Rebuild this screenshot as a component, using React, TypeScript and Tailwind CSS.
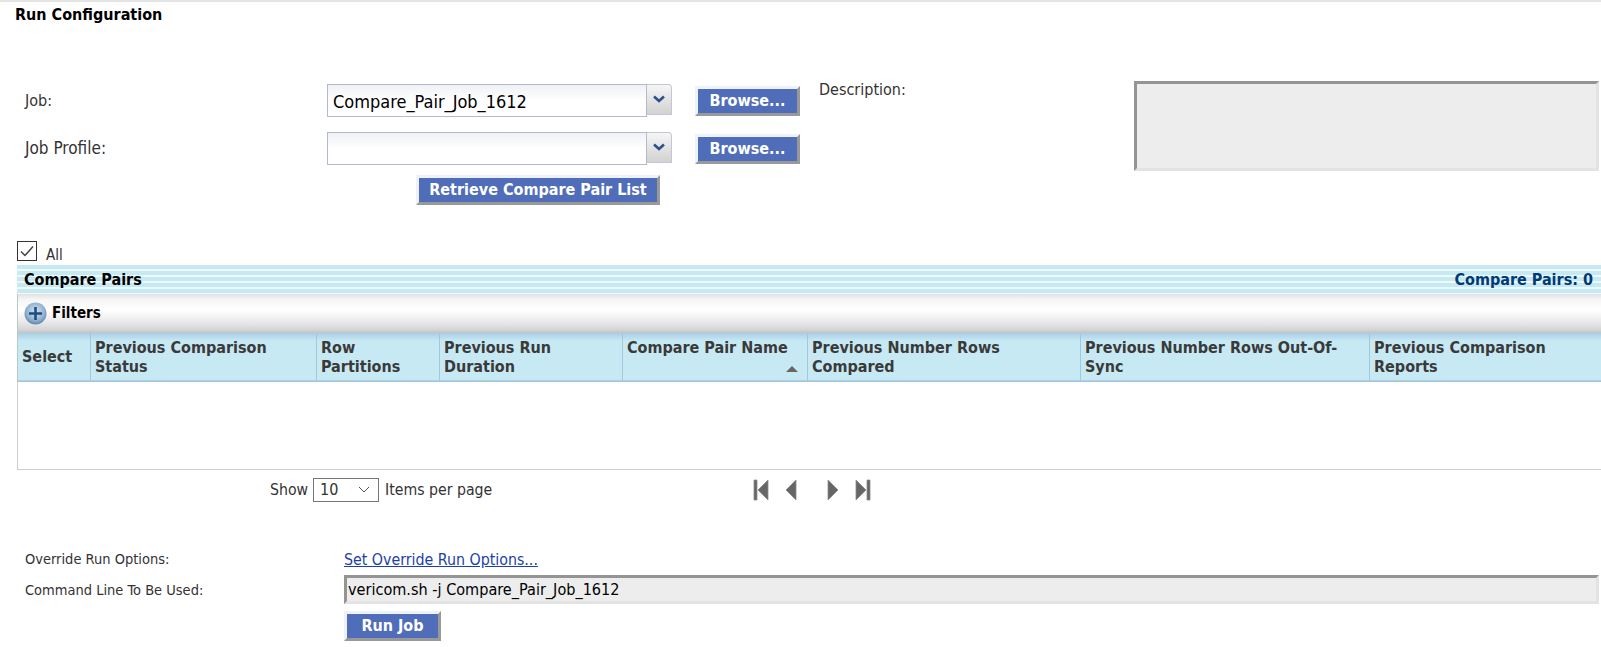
import React from 'react';

const columns = [
  { label: 'Select', width: 'w-[73px]' },
  { label: 'Previous Comparison\nStatus', width: 'w-[226px]' },
  { label: 'Row\nPartitions', width: 'w-[123px]' },
  { label: 'Previous Run\nDuration', width: 'w-[183px]' },
  { label: 'Compare Pair Name', width: 'w-[185px]', sorted: true },
  { label: 'Previous Number Rows\nCompared', width: 'w-[273px]' },
  { label: 'Previous Number Rows Out-Of-\nSync', width: 'w-[289px]' },
  { label: 'Previous Comparison\nReports', width: 'w-[232px]' },
];

const ActionButton = ({ label, className }: { label: string; className: string }) => (
  <button
    className={`flex items-center justify-center border-[3px] border-t-[#eef2fb] border-l-[#eef2fb] border-r-[#999999] border-b-[#999999] bg-[#4f6db8] text-[16px] font-bold text-white ${className}`}>
    {label}
  </button>
);

const Combo = ({ value }: { value?: string }) => (
  <div className="flex h-[33px] w-[345px] items-start">
    <div className="h-[33px] w-[320px] border border-[#b5b8cf] bg-gradient-to-b from-[#eef1f3] via-white to-white pl-[5px] text-[18px] leading-[33px] text-black">
      {value}
    </div>
    <div className="flex h-[31px] w-[25px] items-center justify-center rounded-tr-sm border border-l-0 border-[#c4c6d6] bg-gradient-to-b from-[#f6f6f6] to-[#d2d2d2]">
      <svg width="14" height="9" viewBox="0 0 14 9">
        <path d="M2 1.5 L7 6 L12 1.5" fill="none" stroke="#2f4f8f" strokeWidth="2.6" />
      </svg>
    </div>
  </div>
);

const PagerIcon = ({ d, className }: { d: string; className: string }) => (
  <svg width="16" height="22" viewBox="0 0 16 22" className={className}>
    <path d={d} fill="#666666" stroke="#8a8a8a" strokeWidth="0.8" />
  </svg>
);

export default function App() {
  return (
    <div className="h-[647px] w-full overflow-hidden border-t-2 border-[#e4e4e4] bg-white font-['DejaVu_Sans',sans-serif] text-[#333333] [font-stretch:condensed]">
      <h1 className="h-[26px] pl-[15px] pt-[3px] text-[16px] leading-[20px] font-bold text-black">Run Configuration</h1>

      {/* Job form */}
      <div className="mt-[56px] flex items-start">
        <div className="w-[819px]">
          <div className="flex h-[33px] items-center pl-[25px]">
            <span className="w-[302px] pt-[1px] text-[16px]">Job:</span>
            <Combo value="Compare_Pair_Job_1612" />
            <ActionButton label="Browse..." className="ml-[23px] h-[30px] w-[105px]" />
          </div>
          <div className="mt-[15px] flex h-[33px] items-center pl-[25px]">
            <span className="w-[302px] pt-[1px] text-[17px]">Job Profile:</span>
            <Combo />
            <ActionButton label="Browse..." className="ml-[23px] h-[30px] w-[105px]" />
          </div>
          <ActionButton label="Retrieve Compare Pair List" className="ml-[416px] mt-[10px] h-[30px] w-[244px]" />
        </div>
        <span className="-mt-[6px] w-[315px] text-[16px]">Description:</span>
        <div className="-mt-[3px] h-[90px] w-[465px] border-[3px] border-t-[#949494] border-l-[#949494] border-r-[#e3e3e3] border-b-[#e3e3e3] bg-[#ededed]" />
      </div>

      {/* All checkbox */}
      <div className="mt-[36px] flex h-[24px] items-start pl-[17px]">
        <div className="flex h-[20px] w-[20px] items-center justify-center border border-[#333333] bg-white">
          <svg width="16" height="14" viewBox="0 0 16 14">
            <path d="M2 7.5 L6 11.5 L14 2.5" fill="none" stroke="#444444" strokeWidth="1.5" />
          </svg>
        </div>
        <span className="ml-[9px] mt-[4px] text-[15px] leading-[20px]">All</span>
      </div>

      {/* Compare pairs grid */}
      <div className="ml-[17px]">
        <div className="flex h-[29px] items-center justify-between bg-[repeating-linear-gradient(180deg,#c7e9f4_0px,#c7e9f4_4px,#eef9fc_4px,#eef9fc_6px)] pl-[7px] pr-[8px] text-[16px] font-bold">
          <span className="text-black">Compare Pairs</span>
          <span className="text-[#003a75]">Compare Pairs: 0</span>
        </div>
        <div className="flex h-[39px] items-center gap-[5px] border-l border-[#b9c9c4] bg-[linear-gradient(180deg,#e2e2e2_0%,#f6f6f6_15%,#ffffff_42%,#e6e6e6_75%,#d4d4d4_92%,#c2c2c2_100%)] pl-[6px] text-[15px] font-bold text-black">
          <svg width="23" height="23" viewBox="0 0 23 23">
            <defs>
              <radialGradient id="plusFill" cx="50%" cy="40%" r="60%">
                <stop offset="0%" stopColor="#d8e6f2" />
                <stop offset="70%" stopColor="#8fb0cf" />
                <stop offset="100%" stopColor="#5f86ad" />
              </radialGradient>
            </defs>
            <circle cx="11.5" cy="11.5" r="11" fill="url(#plusFill)" />
            <path d="M11.5 5 V18 M5 11.5 H18" stroke="#1c4e80" strokeWidth="2.6" />
          </svg>
          <span>Filters</span>
        </div>
        <table className="w-[1584px] table-fixed border-collapse">
          <thead>
            <tr className="h-[48px] border-b border-[#a6c6de] bg-[linear-gradient(180deg,#a8cfe6_0px,#c7e9f4_8px,#c7e9f4_100%)]">
              {columns.map((col, i) => (
                <th
                  key={col.label}
                  className={`relative whitespace-pre-line px-[4px] text-left align-middle text-[16px] leading-[19px] font-bold text-[#3a3a3a] ${col.width} ${i === 0 ? 'border-l border-[#b9c9c4]' : 'border-l border-[#a6c6de]'} ${col.sorted ? 'align-top pt-[5px]' : ''}`}>
                  {col.label}
                  {col.sorted && (
                    <span className="absolute bottom-[9px] right-[9px] h-0 w-0 border-x-[6px] border-b-[6px] border-x-transparent border-b-[#666666]" />
                  )}
                </th>
              ))}
            </tr>
          </thead>
          <tbody>
            <tr className="h-[88px] border-b border-[#cfcfcf]">
              <td colSpan={8} className="border-l border-[#cfcfcf]" />
            </tr>
          </tbody>
        </table>
      </div>

      {/* Pager */}
      <div className="mt-[8px] flex h-[24px] items-center pl-[270px] text-[15.7px]">
        <span>Show</span>
        <div className="ml-[5px] flex h-[24px] w-[66px] items-center justify-between border border-[#767676] pl-[6px] pr-[8px] text-[16px]">
          10
          <svg width="12" height="7" viewBox="0 0 12 7">
            <path d="M1 1 L6 6 L11 1" fill="none" stroke="#555555" strokeWidth="1" />
          </svg>
        </div>
        <span className="ml-[6px]">Items per page</span>
        <PagerIcon d="M1 1 H4 V21 H1 Z M15 1 V21 L5 11 Z" className="ml-[261px]" />
        <PagerIcon d="M13 1 V21 L3 11 Z" className="ml-[14px]" />
        <PagerIcon d="M3 1 V21 L13 11 Z" className="ml-[26px]" />
        <PagerIcon d="M1 1 V21 L11 11 Z M12 1 H15 V21 H12 Z" className="ml-[14px]" />
      </div>

      {/* Run options */}
      <div className="mt-[47px] flex h-[22px] items-center pl-[25px] text-[14.5px]">
        <span className="w-[319px]">Override Run Options:</span>
        <a className="text-[15.8px] text-[#1a3fae] underline">Set Override Run Options...</a>
      </div>
      <div className="mt-[4px] flex h-[29px] items-center pl-[25px] text-[14.5px]">
        <span className="w-[319px] pt-[3px]">Command Line To Be Used:</span>
        <div className="h-[29px] w-[1255px] border-[3px] border-t-[#949494] border-l-[#949494] border-r-[#e3e3e3] border-b-[#e3e3e3] bg-[#ededed] pl-[1px] text-[16.1px] leading-[23px] text-black">
          vericom.sh -j Compare_Pair_Job_1612
        </div>
      </div>
      <ActionButton label="Run Job" className="ml-[344px] mt-[7px] h-[30px] w-[97px]" />
    </div>
  );
}
